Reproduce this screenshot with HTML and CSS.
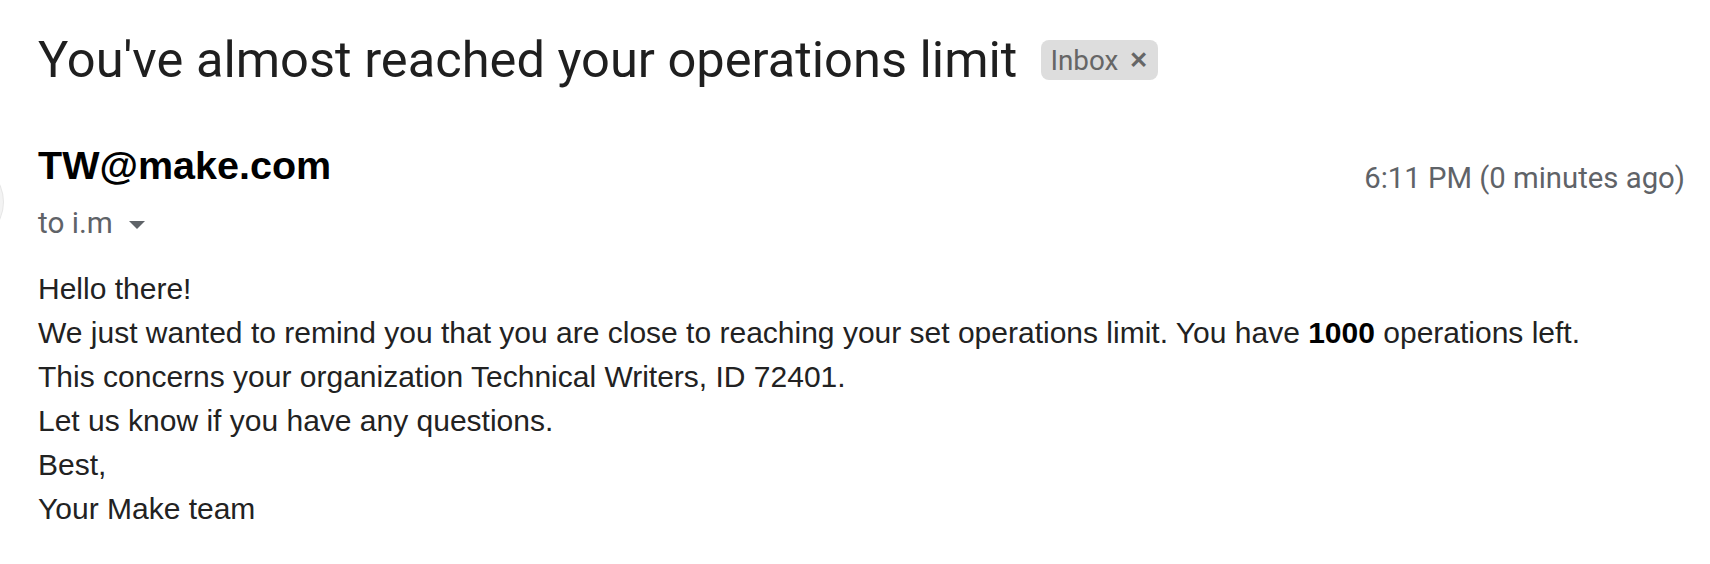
FILE: index.html
```html
<!DOCTYPE html>
<html lang="en">
<head>
<meta charset="utf-8">
<title>You've almost reached your operations limit</title>
<link rel="stylesheet" href="styles.css">
</head>
<body>
<main class="mail">
  <div class="avatar"></div>
  <header class="subject-row">
    <h1 class="subject">You've almost reached your operations limit</h1>
    <span class="chip">Inbox <span class="chip-x">&#x2715;</span></span>
  </header>
  <section class="meta">
    <div class="sender-col">
      <div class="sender">TW@make.com</div>
      <div class="to">to i.m
        <svg class="caret" width="16" height="8" viewBox="0 0 16 8"><path d="M0 0 L16 0 L8 8 Z" fill="#5f6368"/></svg>
      </div>
    </div>
    <div class="time">6:11 PM (0 minutes ago)</div>
  </section>
  <div class="body">
    <p>Hello there!</p>
    <p>We just wanted to remind you that you are close to reaching your set operations limit. You have <b>1000</b> operations left.</p>
    <p>This concerns your organization Technical Writers, ID 72401.</p>
    <p>Let us know if you have any questions.</p>
    <p>Best,</p>
    <p>Your Make team</p>
  </div>
</main>
</body>
</html>
```

FILE: styles.css
```css
html, body {
  margin: 0;
  padding: 0;
  background: #ffffff;
}

.mail {
  position: relative;
  width: 1710px;
  height: 564px;
  overflow: hidden;
  box-sizing: border-box;
  padding: 0 25px 0 38px;
}

.avatar {
  position: absolute;
  left: -77px;
  top: 162px;
  width: 80px;
  height: 80px;
  border-radius: 50%;
  background: #f3f3f3;
  box-shadow: 0 0 0 1px #e6e6e6;
}

.subject-row {
  display: flex;
  align-items: center;
  gap: 24px;
  padding-top: 32px;
  height: 56px;
}

.subject {
  margin: 0;
  font-family: Roboto, "Open Sans", sans-serif;
  font-weight: 400;
  font-size: 50.6px;
  line-height: 56px;
  color: #1f1f1f;
  white-space: nowrap;
}

.chip {
  display: inline-flex;
  align-items: center;
  gap: 11px;
  height: 40px;
  padding: 0 10px 0 9px;
  border-radius: 8px;
  background: #dddddd;
  color: #666666;
  font-family: Roboto, sans-serif;
  font-size: 27.8px;
}

.chip-x {
  font-size: 23px;
  font-weight: 700;
  color: #666666;
}

.meta {
  display: flex;
  justify-content: space-between;
  align-items: flex-start;
  margin-top: 54px;
}

.sender {
  font-family: "Liberation Sans", Arial, sans-serif;
  font-weight: 700;
  font-size: 39.5px;
  line-height: 46px;
  color: #000000;
}

.to {
  display: flex;
  align-items: center;
  gap: 16px;
  margin-top: 18px;
  font-family: Roboto, sans-serif;
  font-size: 29.7px;
  line-height: 34px;
  color: #5f6368;
}

.caret {
  margin-top: 4px;
}

.time {
  margin-top: 20px;
  font-family: Roboto, sans-serif;
  font-size: 29.3px;
  line-height: 32px;
  color: #5f6368;
}

.body {
  margin-top: 27px;
  font-family: "Liberation Sans", Arial, sans-serif;
  font-size: 30px;
  line-height: 44px;
  color: #222222;
}

.body p {
  margin: 0;
}

.body b {
  color: #000000;
}
```
